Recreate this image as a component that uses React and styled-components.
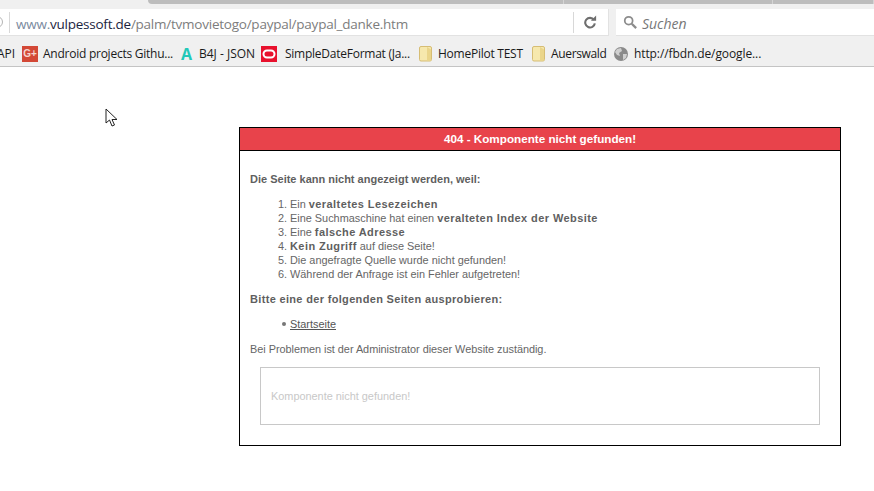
import React from 'react';
import styled, { createGlobalStyle } from 'styled-components';

const GlobalStyle = createGlobalStyle`
  html, body {
    margin: 0;
    padding: 0;
    background: #fff;
    overflow: hidden;
  }
`

const Screen = styled.div`
  position: relative;
  width: 874px;
  height: 491px;
  overflow: hidden;
`

const TabStrip = styled.div`
  display: flex;
  height: 4px;
  background: #f0f0f0;
  padding-left: 148px;
`
const TabShade = styled.div`
  flex: ${p => p.$width ? `0 0 ${p.$width}px` : '1'};
  box-sizing: border-box;
  height: 4px;
  background: #bdbdbd;
  border-right: 1px solid #d4d4d4;
  border-bottom-left-radius: ${p => p.$first ? 6 : 0}px;
`

const Toolbar = styled.div`
  display: flex;
  height: 36px;
  padding-top: 5px;
  box-sizing: border-box;
  gap: 7px;
  background: #f0f0f0;
`

const UrlBox = styled.div`
  display: flex;
  align-items: center;
  width: 609px;
  height: 27px;
  background: #fff;
  border-right: 1px solid #e2e2e2;
  border-bottom: 1px solid #e2e2e2;
  box-sizing: border-box;
`
const Info = styled.div`
  width: 10px;
  height: 10px;
  margin-left: -9px;
  border: 1.5px solid #b5b5b5;
  border-radius: 50%;
  flex: none;
`
const Divider = styled.div`
  width: 1px;
  height: 21px;
  background: #d8d8d8;
  flex: none;
  margin: ${p => p.$margin};
`
const Url = styled.div`
  flex: 1;
  padding-top: 3px;
  font: 13.5px "Open Sans", sans-serif;
  letter-spacing: -0.24px;
  color: #7d7d7d;
  white-space: nowrap;
`
const UrlHost = styled.span`
  color: #1c2440;
`
const UrlPrefix = styled.span`
  color: #7a8a9e;
`
const Reload = styled.svg`
  width: 14px;
  height: 14px;
  margin-right: 11px;
  flex: none;
`

const SearchBox = styled.div`
  flex: 1;
  display: flex;
  align-items: center;
  gap: 5px;
  height: 27px;
  padding-left: 7px;
  background: #fff;
  border-bottom: 1px solid #e2e2e2;
  box-sizing: border-box;
`
const SearchIcon = styled.svg`
  width: 14px;
  height: 14px;
  flex: none;
`
const SearchText = styled.span`
  padding-top: 3px;
  font: italic 14px "Open Sans", sans-serif;
  color: #777;
`

const BookmarkBar = styled.div`
  display: flex;
  align-items: center;
  height: 27px;
  padding-top: 1px;
  box-sizing: border-box;
  background: #f0f0f0;
  border-bottom: 1px solid #c4c4c4;
  font: 12px "Open Sans", sans-serif;
  color: #1a1a1a;
  white-space: nowrap;
`
const Bookmark = styled.div`
  display: flex;
  align-items: center;
  gap: ${p => p.$gap || 5}px;
  flex: none;
  width: ${p => p.$width}px;
  margin-left: ${p => p.$left || 0}px;
  letter-spacing: ${p => p.$spacing ?? -0.25}px;
`
const GooglePlus = styled.div`
  display: flex;
  align-items: center;
  justify-content: center;
  width: 16px;
  height: 16px;
  background: #d34836;
  color: #f5d5d0;
  font: bold 10px "Liberation Sans", sans-serif;
  letter-spacing: 0;
  flex: none;
`
const TealA = styled.div`
  width: 13px;
  text-align: center;
  font: bold 16px "Open Sans", sans-serif;
  color: #22c8b8;
  flex: none;
`
const Icon = styled.svg`
  width: 16px;
  height: 16px;
  flex: none;
`

const Page = styled.div`
  padding: 60px 0 0 239px;
`
const Card = styled.div`
  width: 602px;
  height: 319px;
  box-sizing: border-box;
  border: 1px solid #000;
  font: 10.9px "Liberation Sans", Arial, sans-serif;
  color: #666;
`
const CardTitle = styled.div`
  height: 23px;
  line-height: 21px;
  background: #e8434b;
  border-bottom: 1px solid #000;
  box-sizing: border-box;
  text-align: center;
  font-weight: bold;
  font-size: 11.7px;
  color: #fff;
`
const CardBody = styled.div`
  padding: 21px 10px 0;
`
const Lead = styled.div`
  font-weight: bold;
  font-size: 11px;
  line-height: 14px;
  letter-spacing: ${p => p.$spacing || 0}px;
  color: #5f5f5f;
`
const Numbered = styled.ol`
  margin: 11px 0;
  padding-left: 40px;
  line-height: 14px;
`
const Bullets = styled.ul`
  margin: 11px 0;
  padding-left: 40px;
  line-height: 14px;
  list-style: none;

  li::before {
    content: "";
    display: inline-block;
    width: 4px;
    height: 4px;
    margin: 0 4px 2px -8px;
    border-radius: 50%;
    background: #777;
  }
`
const Strong = styled.strong`
  font-size: 11px;
  letter-spacing: 0.42px;
  line-height: 0;
  color: #5f5f5f;
`
const Link = styled.a`
  color: #555;
  text-decoration: underline;
`
const Note = styled.div`
  line-height: 14px;
  letter-spacing: -0.03px;
`
const ErrorBox = styled.div`
  display: flex;
  align-items: center;
  width: 560px;
  height: 58px;
  margin: 11px 0 0 10px;
  padding: 0 10px;
  box-sizing: border-box;
  border: 1px solid #c8c8c8;
  color: #c8c8c8;
`
const Cursor = styled.svg`
  position: absolute;
  left: 105px;
  top: 108px;
  width: 14px;
  height: 20px;
`

function Folder() {
  return (
    <Icon viewBox="0 0 16 16">
      <rect x="1.5" y="0.5" width="12" height="14.5" rx="1.5" fill="#f6e8ad" stroke="#d6bd74" />
      <path d="M9 1 L13 3.5 V14.5 H9 Z" fill="#ead58a" />
    </Icon>
  )
}

export default function App() {
  return (
    <Screen>
      <GlobalStyle />
      <TabStrip>
        <TabShade $first $width={416} />
        <TabShade $width={209} />
        <TabShade />
      </TabStrip>
      <Toolbar>
        <UrlBox>
          <Info />
          <Divider $margin="0 6px 0 6px" />
          <Url>
            <UrlPrefix>www.</UrlPrefix><UrlHost>vulpessoft.de</UrlHost>/palm/tvmovietogo/paypal/paypal_danke.htm
          </Url>
          <Divider $margin="0 9px 0 0" />
          <Reload viewBox="0 0 16 16">
            <path d="M12.5 5.5 A5.5 5.5 0 1 0 13.5 9.5" fill="none" stroke="#6e6e6e" strokeWidth="2.4" />
            <path d="M9 6.5 h6 v-6 z" fill="#6e6e6e" />
          </Reload>
        </UrlBox>
        <SearchBox>
          <SearchIcon viewBox="0 0 16 16">
            <circle cx="6.5" cy="6.5" r="4.5" fill="none" stroke="#8c8c8c" strokeWidth="2" />
            <path d="M10 10 L15 15" stroke="#8c8c8c" strokeWidth="2.6" />
          </SearchIcon>
          <SearchText>Suchen</SearchText>
        </SearchBox>
      </Toolbar>
      <BookmarkBar>
        <Bookmark $width={25} $left={-3} $spacing={0}>API</Bookmark>
        <Bookmark $width={158}>
          <GooglePlus>G+</GooglePlus>
          Android projects Githu...
        </Bookmark>
        <Bookmark $width={81} $gap={6} $spacing={0}>
          <TealA>A</TealA>
          B4J - JSON
        </Bookmark>
        <Bookmark $width={157} $gap={8}>
          <Icon viewBox="0 0 16 16">
            <rect width="16" height="16" fill="#e8112d" />
            <rect x="2.5" y="4.5" width="11" height="7" rx="3.5" fill="none" stroke="#fff" strokeWidth="2" />
          </Icon>
          SimpleDateFormat (Ja...
        </Bookmark>
        <Bookmark $width={113} $gap={4}>
          <Folder />
          HomePilot TEST
        </Bookmark>
        <Bookmark $width={82} $gap={4} $spacing={-0.35}>
          <Folder />
          Auerswald
        </Bookmark>
        <Bookmark $width={160} $gap={5} $spacing={-0.1}>
          <Icon viewBox="0 0 16 16">
            <circle cx="8" cy="8" r="7" fill="#8a8a8a" />
            <path d="M4 3 L8 2 L9 5 L6 7 L7 10 L4 9 L2 6 z M10 8 L14 8 L13 12 L10 14 z" fill="#d0d0d0" />
          </Icon>
          http://fbdn.de/google...
        </Bookmark>
      </BookmarkBar>
      <Page>
        <Card>
          <CardTitle>404 - Komponente nicht gefunden!</CardTitle>
          <CardBody>
            <Lead>Die Seite kann nicht angezeigt werden, weil:</Lead>
            <Numbered>
              <li>Ein <Strong>veraltetes Lesezeichen</Strong></li>
              <li>Eine Suchmaschine hat einen <Strong>veralteten Index der Website</Strong></li>
              <li>Eine <Strong>falsche Adresse</Strong></li>
              <li><Strong>Kein Zugriff</Strong> auf diese Seite!</li>
              <li>Die angefragte Quelle wurde nicht gefunden!</li>
              <li>Während der Anfrage ist ein Fehler aufgetreten!</li>
            </Numbered>
            <Lead $spacing={0.33}>Bitte eine der folgenden Seiten ausprobieren:</Lead>
            <Bullets>
              <li><Link href="#">Startseite</Link></li>
            </Bullets>
            <Note>Bei Problemen ist der Administrator dieser Website zuständig.</Note>
            <ErrorBox>Komponente nicht gefunden!</ErrorBox>
          </CardBody>
        </Card>
      </Page>
      <Cursor viewBox="0 0 14 20">
        <path d="M1 1 V15 L4.5 12 L7 18 L9.5 17 L7 11.5 H12 Z" fill="#fff" stroke="#222" strokeWidth="1" />
      </Cursor>
    </Screen>
  )
}
